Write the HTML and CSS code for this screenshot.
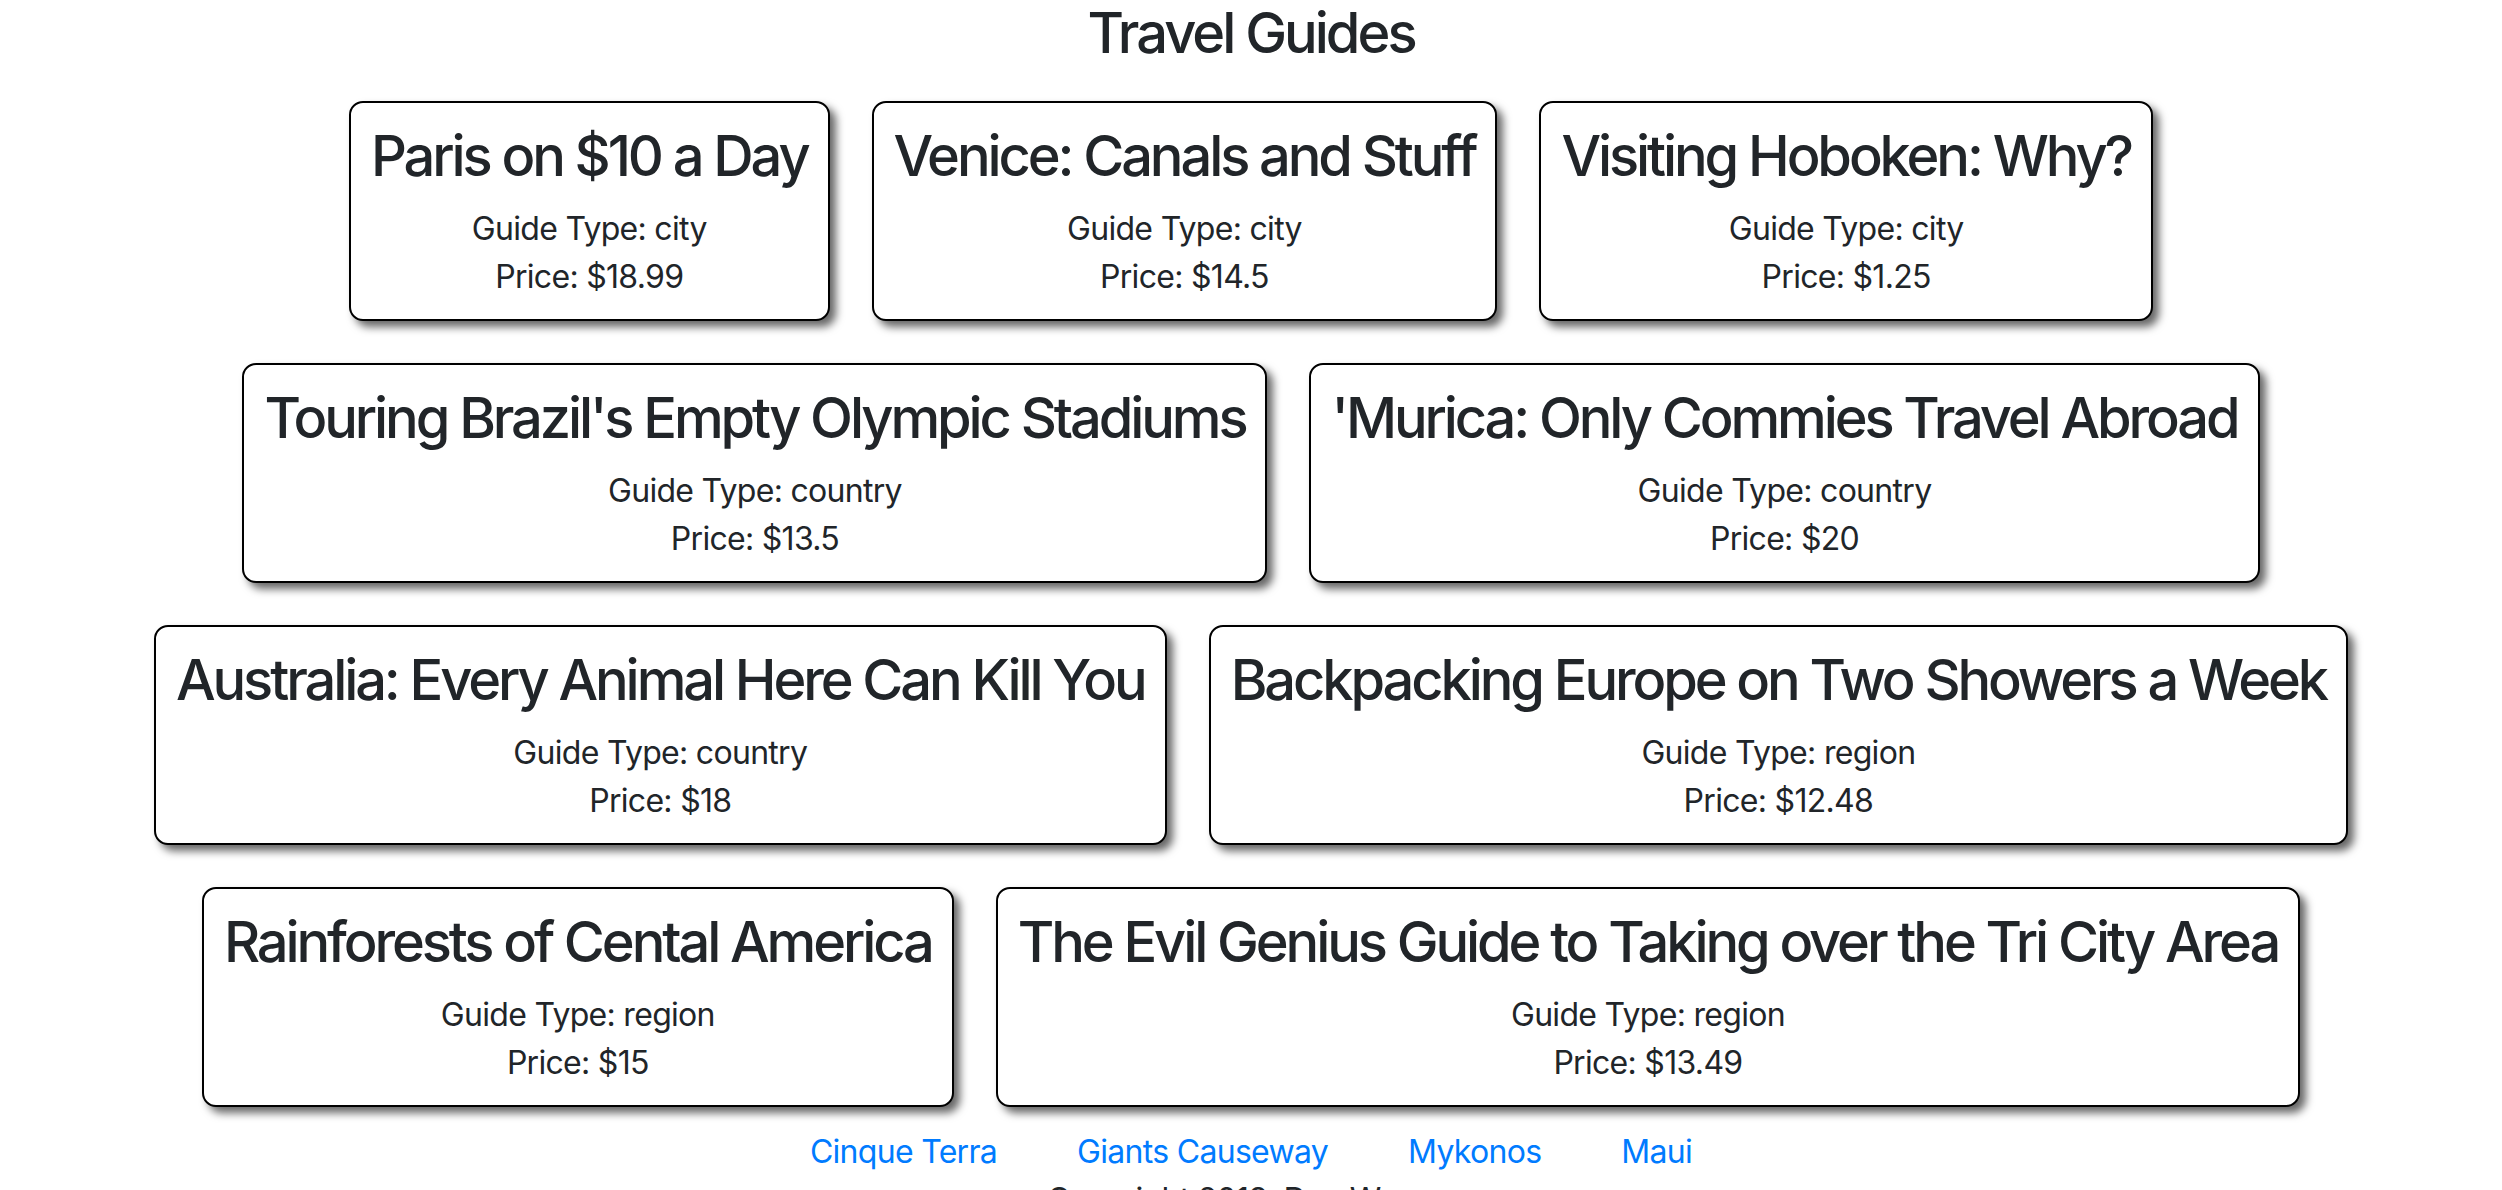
FILE: index.html
```html
<!DOCTYPE html>
<html lang="en">
<head>
<meta charset="utf-8">
<title>Travel Guides</title>
<link rel="stylesheet" href="styles.css">
</head>
<body>
<h1 class="page-title">Travel Guides</h1>
<div class="guides">
  <div class="guide-card">
    <h3 class="guide-title">Paris on $10 a Day</h3>
    <p class="guide-line">Guide Type: city</p>
    <p class="guide-line">Price: $18.99</p>
  </div>
  <div class="guide-card">
    <h3 class="guide-title">Venice: Canals and Stuff</h3>
    <p class="guide-line">Guide Type: city</p>
    <p class="guide-line">Price: $14.5</p>
  </div>
  <div class="guide-card">
    <h3 class="guide-title">Visiting Hoboken: Why?</h3>
    <p class="guide-line">Guide Type: city</p>
    <p class="guide-line">Price: $1.25</p>
  </div>
  <div class="guide-card">
    <h3 class="guide-title">Touring Brazil's Empty Olympic Stadiums</h3>
    <p class="guide-line">Guide Type: country</p>
    <p class="guide-line">Price: $13.5</p>
  </div>
  <div class="guide-card">
    <h3 class="guide-title">'Murica: Only Commies Travel Abroad</h3>
    <p class="guide-line">Guide Type: country</p>
    <p class="guide-line">Price: $20</p>
  </div>
  <div class="guide-card">
    <h3 class="guide-title">Australia: Every Animal Here Can Kill You</h3>
    <p class="guide-line">Guide Type: country</p>
    <p class="guide-line">Price: $18</p>
  </div>
  <div class="guide-card">
    <h3 class="guide-title">Backpacking Europe on Two Showers a Week</h3>
    <p class="guide-line">Guide Type: region</p>
    <p class="guide-line">Price: $12.48</p>
  </div>
  <div class="guide-card">
    <h3 class="guide-title">Rainforests of Cental America</h3>
    <p class="guide-line">Guide Type: region</p>
    <p class="guide-line">Price: $15</p>
  </div>
  <div class="guide-card">
    <h3 class="guide-title">The Evil Genius Guide to Taking over the Tri City Area</h3>
    <p class="guide-line">Guide Type: region</p>
    <p class="guide-line">Price: $13.49</p>
  </div>
</div>
<footer class="site-footer">
  <nav class="footer-links">
    <a href="#" class="footer-link">Cinque Terra</a>
    <a href="#" class="footer-link">Giants Causeway</a>
    <a href="#" class="footer-link">Mykonos</a>
    <a href="#" class="footer-link">Maui</a>
  </nav>
  <p class="copyright">Copyright 2019, Dan Warren</p>
</footer>
</body>
</html>
```

FILE: styles.css
```css
html, body {
  margin: 0;
  padding: 0;
  background: #fff;
}

body {
  font-family: Inter, Roboto, "Liberation Sans", sans-serif;
  font-size: 32px;
  line-height: 48px;
  letter-spacing: -0.7px;
  color: #212529;
  text-align: center;
}

.page-title {
  margin: 0 0 13px;
  font-size: 56px;
  font-weight: 500;
  line-height: 67px;
  letter-spacing: -3px;
}

.guides {
  display: flex;
  flex-wrap: wrap;
  justify-content: center;
}

.guide-card {
  margin: 21px;
  padding: 20px 20px 18px;
  border: 2px solid #000;
  border-radius: 14px;
  background: #fff;
  box-shadow: 6px 6px 9px rgba(0, 0, 0, 0.6);
}

.guide-title {
  margin: 0 0 15px;
  font-size: 56px;
  font-weight: 500;
  line-height: 67px;
  letter-spacing: -3.1px;
  white-space: nowrap;
}

.guide-line {
  margin: 0;
}

.site-footer {
  margin-top: 0;
}

.footer-links {
  display: flex;
  justify-content: center;
  gap: 80px;
}

.footer-link {
  color: #007bff;
  text-decoration: none;
}

.copyright {
  margin: 0;
}
```
